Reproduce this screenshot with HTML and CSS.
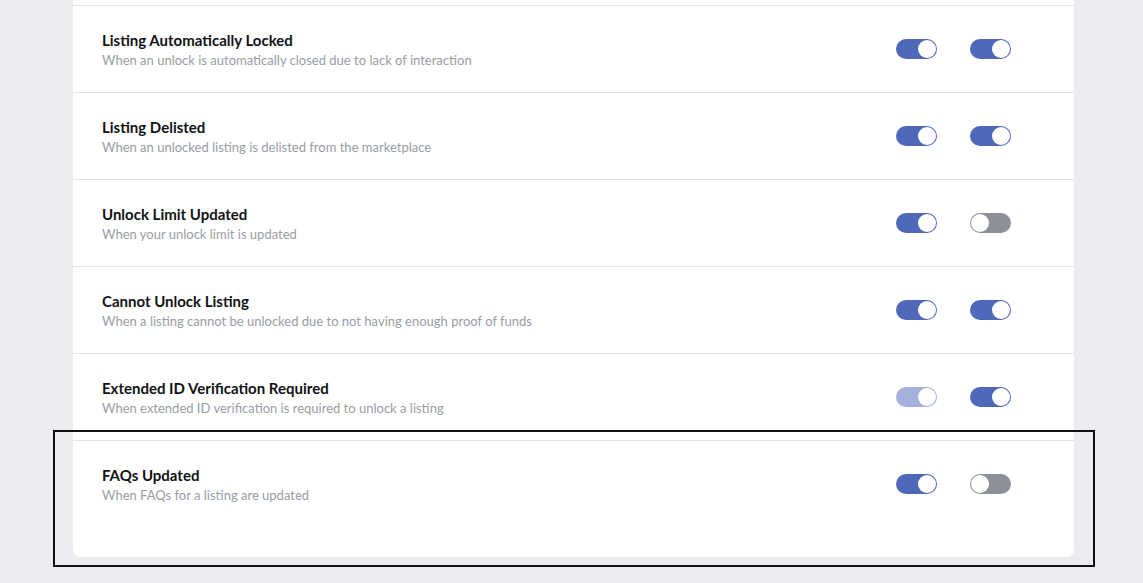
FILE: index.html
```html
<!DOCTYPE html>
<html lang="en">
<head>
    <meta charset="UTF-8">
    <meta name="viewport" content="width=device-width, initial-scale=1.0">
    <title>Notification Settings</title>
    <link rel="stylesheet" href="styles.css">
</head>
<body>
    <div class="page">
        <div class="card">
            <div class="row">
                <div class="row-text">
                    <h3>Listing Automatically Locked</h3>
                    <p>When an unlock is automatically closed due to lack of interaction</p>
                </div>
                <div class="toggles">
                    <span class="toggle on"></span>
                    <span class="toggle on"></span>
                </div>
            </div>
            <div class="row">
                <div class="row-text">
                    <h3>Listing Delisted</h3>
                    <p>When an unlocked listing is delisted from the marketplace</p>
                </div>
                <div class="toggles">
                    <span class="toggle on"></span>
                    <span class="toggle on"></span>
                </div>
            </div>
            <div class="row">
                <div class="row-text">
                    <h3>Unlock Limit Updated</h3>
                    <p>When your unlock limit is updated</p>
                </div>
                <div class="toggles">
                    <span class="toggle on"></span>
                    <span class="toggle"></span>
                </div>
            </div>
            <div class="row">
                <div class="row-text">
                    <h3>Cannot Unlock Listing</h3>
                    <p>When a listing cannot be unlocked due to not having enough proof of funds</p>
                </div>
                <div class="toggles">
                    <span class="toggle on"></span>
                    <span class="toggle on"></span>
                </div>
            </div>
            <div class="row">
                <div class="row-text">
                    <h3>Extended ID Verification Required</h3>
                    <p>When extended ID verification is required to unlock a listing</p>
                </div>
                <div class="toggles">
                    <span class="toggle on disabled"></span>
                    <span class="toggle on"></span>
                </div>
            </div>
            <div class="row">
                <div class="row-text">
                    <h3>FAQs Updated</h3>
                    <p>When FAQs for a listing are updated</p>
                </div>
                <div class="toggles">
                    <span class="toggle on"></span>
                    <span class="toggle"></span>
                </div>
            </div>
            <div class="highlight"></div>
        </div>
    </div>
</body>
</html>
```

FILE: styles.css
```css
* {
    margin: 0;
    padding: 0;
    box-sizing: border-box;
}

body {
    font-family: Lato, 'Open Sans', sans-serif;
    background: #ebecf0;
    height: 583px;
    overflow: hidden;
}

.page {
    padding: 0 69px 0 73px;
}

.card {
    position: relative;
    background: #fff;
    padding: 5px 0 30px;
    border-radius: 0 0 7px 7px;
}

.row {
    display: flex;
    align-items: center;
    justify-content: space-between;
    height: 87px;
    padding: 0 63px 0 29px;
    border-top: 1px solid #e0e2ea;
}

.row-text {
    margin-top: 2px;
}

.row-text h3 {
    font-size: 15px;
    font-weight: 700;
    color: #111216;
    line-height: 20px;
}

.row-text p {
    font-size: 13px;
    color: #9a9ca5;
    line-height: 20px;
}

.toggles {
    display: flex;
    gap: 33px;
}

.toggle {
    position: relative;
    display: block;
    width: 41px;
    height: 20px;
    border-radius: 10px;
    background: #8e9099;
}

.toggle::after {
    content: '';
    position: absolute;
    top: 1px;
    left: 1px;
    width: 18px;
    height: 18px;
    border-radius: 50%;
    background: #fff;
}

.toggle.on {
    background: #5068b9;
}

.toggle.on::after {
    left: auto;
    right: 1px;
}

.toggle.disabled {
    background: #a3b1dc;
}

.highlight {
    position: absolute;
    left: -20px;
    right: -21px;
    bottom: -10px;
    height: 137px;
    border: 2px solid #111;
}
```
